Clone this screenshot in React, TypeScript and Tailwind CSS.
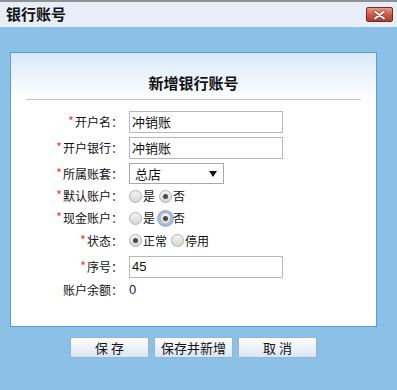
import React from "react";

const cjk = "font-['SimSun','Noto_Sans_CJK_SC',sans-serif]";

const Star = () => <span className="text-[#ff2a2a] text-[12px] mr-[1px] relative top-[-1px]">*</span>;

const Label = ({ text, req = true }: { text: string; req?: boolean }) => (
  <div className={`w-[114px] text-right pr-[2px] text-[12px] text-[#111] ${cjk} whitespace-nowrap`}>
    {req && <Star />}
    {text}：
  </div>
);

const Radio = ({ checked, focus }: { checked?: boolean; focus?: boolean }) => (
  <span
    className={`inline-flex items-center justify-center w-[13px] h-[13px] rounded-full border border-[#b0b0b0] bg-linear-to-b from-[#f4f4f4] to-[#d6d6d6] ${
      focus ? "outline-2 outline-[#8fb4ec] outline-offset-0 rounded-[3px]" : ""
    }`}
  >
    <span className={`w-[13px] h-[13px] rounded-full flex items-center justify-center ${focus ? "border border-[#b0b0b0]" : ""}`}>
      {checked && <span className="w-[5px] h-[5px] rounded-full bg-[#4a4a4a]" />}
    </span>
  </span>
);

const Opt = ({ text, checked, focus }: { text: string; checked?: boolean; focus?: boolean }) => (
  <span className="inline-flex items-center mr-[4px]">
    <Radio checked={checked} focus={focus} />
    <span className={`text-[12px] text-[#111] ml-[1px] ${cjk}`}>{text}</span>
  </span>
);

const TextBox = ({ value, num }: { value: string; num?: boolean }) => (
  <div
    className={`w-[154px] h-[22px] border border-[#b8b8b8] bg-white flex items-center pl-[2px] text-[13px] text-[#111] ${
      num ? "font-['Liberation_Sans',sans-serif]" : cjk
    }`}
  >
    {value}
  </div>
);

const Btn = ({ text }: { text: string }) => (
  <button
    className={`w-[79px] h-[21px] border border-[#9db2cc] bg-linear-to-b from-[#fdfdfe] via-[#eef3f9] to-[#d7e5f4] text-[13px] text-[#111] ${cjk} flex items-center justify-center`}
  >
    {text}
  </button>
);

export default function App() {
  return (
    <div className="w-[397px] h-[390px] bg-[#8bc1e6] flex flex-col overflow-hidden">
      {/* top bar */}
      <div className="h-[2px] bg-[#8d9297]" />
      <div className="h-[25px] bg-[#e7eef7] flex items-center justify-between pl-[6px] pr-[4px]">
        <span className={`text-[15px] font-bold text-[#111] ${cjk}`}>银行账号</span>
        <div className="w-[27px] h-[15px] rounded-[2px] border border-[#6b2d2a] bg-linear-to-b from-[#e99a88] via-[#cf5a45] to-[#b63a2c] flex items-center justify-center">
          <svg width="13" height="10" viewBox="0 0 13 10">
            <path d="M2 1.5 L11 8.5 M11 1.5 L2 8.5" stroke="#7a3a34" strokeWidth="3.4" strokeLinecap="round" />
            <path d="M2 1.5 L11 8.5 M11 1.5 L2 8.5" stroke="#ffffff" strokeWidth="2" strokeLinecap="round" />
          </svg>
        </div>
      </div>

      <div className="pt-[25px] pl-[10px]">
        <div className="w-[367px] h-[275px] border border-[#5a9ed8] bg-white flex flex-col">
          <div className="bg-linear-to-b from-[#d9e9f8] to-white">
            <div className="mx-[15px] pt-[20px] pb-[6px] border-b border-[#c4c4c4] text-center">
              <div className={`leading-[20px] text-[15px] font-bold text-[#111] ${cjk}`}>新增银行账号</div>
            </div>
          </div>

          <div className="pt-[11px] flex flex-col">
            <div className="h-[26px] flex items-start">
              <div className="h-[22px] flex items-center"><Label text="开户名" /></div>
              <div className="ml-[4px]"><TextBox value="冲销账" /></div>
            </div>
            <div className="h-[26px] flex items-start">
              <div className="h-[22px] flex items-center"><Label text="开户银行" /></div>
              <div className="ml-[4px]"><TextBox value="冲销账" /></div>
            </div>
            <div className="h-[22px] flex items-start">
              <div className="h-[21px] flex items-center"><Label text="所属账套" /></div>
              <div className={`ml-[4px] w-[95px] h-[21px] border border-[#a9a9a9] bg-white flex items-center justify-between pl-[5px] pr-[6px] text-[13px] text-[#111] ${cjk}`}>
                <span>总店</span>
                <svg width="8" height="6" viewBox="0 0 8 6"><path d="M0 0 L8 0 L4 6 Z" fill="#111" /></svg>
              </div>
            </div>
            <div className="h-[22px] flex items-center">
              <Label text="默认账户" />
              <div className="ml-[4px] flex items-center">
                <Opt text="是" />
                <Opt text="否" checked />
              </div>
            </div>
            <div className="h-[22px] flex items-center">
              <Label text="现金账户" />
              <div className="ml-[4px] flex items-center">
                <Opt text="是" />
                <Opt text="否" checked focus />
              </div>
            </div>
            <div className="h-[23px] flex items-center">
              <Label text="状态" />
              <div className="ml-[4px] flex items-center">
                <Opt text="正常" checked />
                <Opt text="停用" />
              </div>
            </div>
            <div className="h-[29px] flex items-center">
              <Label text="序号" />
              <div className="ml-[4px]"><TextBox value="45" num /></div>
            </div>
            <div className="h-[18px] flex items-center">
              <Label text="账户余额" req={false} />
              <span className="ml-[4px] text-[13px] text-[#1a1a40] font-['Liberation_Sans',sans-serif]">0</span>
            </div>
          </div>
        </div>

        <div className="w-[367px] mt-[10px] flex justify-center gap-[5px]">
          <Btn text="保 存" />
          <Btn text="保存并新增" />
          <Btn text="取 消" />
        </div>
      </div>
    </div>
  );
}
